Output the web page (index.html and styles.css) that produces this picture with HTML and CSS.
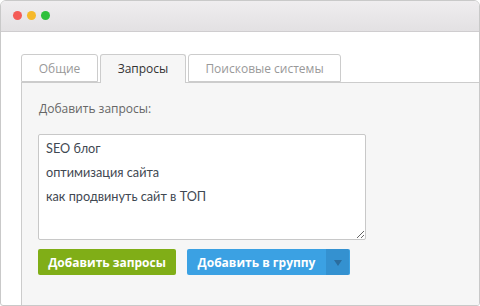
FILE: index.html
```html
<!DOCTYPE html>
<html lang="ru">
<head>
<meta charset="utf-8">
<link rel="stylesheet" href="styles.css">
</head>
<body>
<div class="window">
  <div class="titlebar">
    <span class="dot red"></span>
    <span class="dot yellow"></span>
    <span class="dot green"></span>
  </div>
  <div class="content">
    <div class="tabs">
      <div class="tab tab-general">Общие</div>
      <div class="tab tab-queries active">Запросы</div>
      <div class="tab tab-engines">Поисковые системы</div>
    </div>
    <div class="panel">
      <div class="label">Добавить запросы:</div>
      <textarea class="queries" readonly>SEO блог
оптимизация сайта
как продвинуть сайт в ТОП</textarea>
      <div class="actions">
        <button class="btn btn-green">Добавить запросы</button>
        <div class="split">
          <button class="btn btn-blue">Добавить в группу</button>
          <button class="btn btn-caret"><span class="caret"></span></button>
        </div>
      </div>
    </div>
  </div>
</div>
</body>
</html>
```

FILE: styles.css
```css
* { box-sizing: border-box; }
html, body { margin: 0; padding: 0; background: #fff; }
body { width: 480px; height: 306px; overflow: hidden; font-family: "Open Sans", "Liberation Sans", sans-serif; }

.window {
  width: 480px;
  height: 306px;
  border: 1px solid #c9c9c9;
  border-radius: 6px 6px 3px 3px;
  display: flex;
  flex-direction: column;
  overflow: hidden;
  background: #fff;
}

.titlebar {
  height: 31px;
  flex: none;
  background: linear-gradient(#efedef, #e3e1e3);
  border-bottom: 1px solid #cfcdcf;
  display: flex;
  align-items: center;
  padding-left: 12px;
  padding-bottom: 1px;
  gap: 5px;
}
.dot { width: 9px; height: 9px; border-radius: 50%; display: block; }
.red { background: #f45b56; }
.yellow { background: #f6b92b; }
.green { background: #2ec03b; }

.content {
  flex: 1;
  display: flex;
  flex-direction: column;
  padding: 22px 0 0 20px;
}

.tabs { display: flex; gap: 2px; height: 28px; flex: none; position: relative; z-index: 1; }
.tab {
  height: 29px;
  border: 1px solid #cccccc;
  border-bottom: none;
  border-radius: 3px 3px 0 0;
  background: #fff;
  color: #999;
  font-size: 12px;
  text-align: center;
  line-height: 28px;
}
.tab-general { width: 77px; }
.tab-queries { width: 86px; }
.tab-engines { width: 153px; }
.tab.active { background: #f6f6f6; color: #333; }
.tab:not(.active) { height: 28px; border-bottom: 1px solid #ccc; }

.panel {
  flex: 1;
  background: #f6f6f6;
  border-top: 1px solid #cccccc;
  border-left: 1px solid #cccccc;
  padding: 17px 0 0 16px;
}

.label { font-size: 12px; color: #666; line-height: 18px; margin-left: 1px; }

.queries {
  display: block;
  margin-top: 16px;
  width: 328px;
  height: 106px;
  border: 1px solid #c8c8c8;
  border-radius: 2px;
  background: #fff;
  padding: 1px 7px;
  font-family: Lato, "Open Sans", sans-serif;
  font-size: 12.7px;
  line-height: 24px;
  color: #3f4852;
  resize: both;
  outline: none;
}

.actions { display: flex; gap: 11px; margin-top: 9px; }
.btn {
  height: 26px;
  border: none;
  border-radius: 2px;
  color: #fff;
  font-family: "Open Sans", "Liberation Sans", sans-serif;
  font-weight: 700;
  font-size: 12px;
  padding: 0;
  margin: 0;
}
.btn-green { width: 138px; background: #80ae17; }
.split { display: flex; }
.btn-blue { width: 139px; background: #3ba1e3; border-radius: 2px 0 0 2px; }
.btn-caret {
  width: 24px;
  background: #3491d0;
  border-radius: 0 2px 2px 0;
  border-right: 1px solid #3ba1e3;
  display: flex;
  align-items: center;
  justify-content: center;
}
.caret {
  width: 0; height: 0;
  border-left: 4px solid transparent;
  border-right: 4px solid transparent;
  border-top: 6px solid #2b6d9e;
  margin-top: 1px;
}
```
